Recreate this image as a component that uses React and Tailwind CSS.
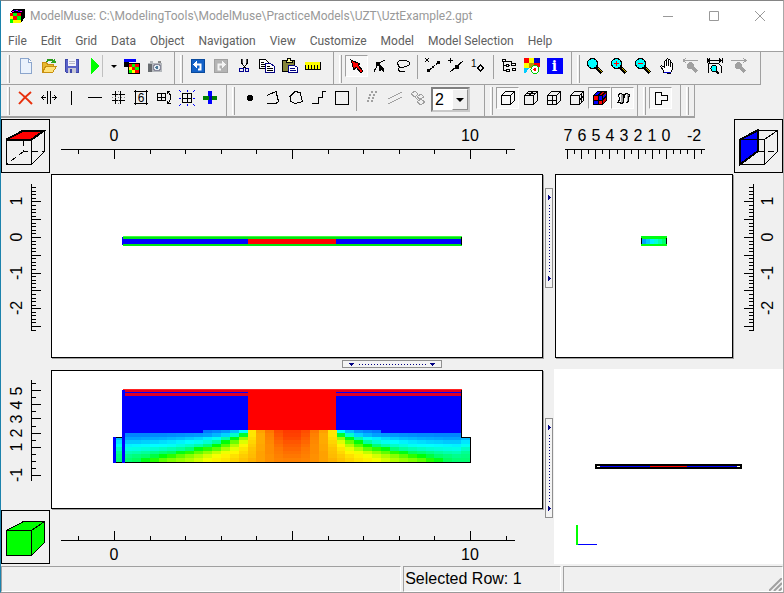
import React, { useState } from 'react';

const menus = [
  'File', 'Edit', 'Grid', 'Data', 'Object', 'Navigation',
  'View', 'Customize', 'Model', 'Model Selection', 'Help',
];

// Hue of every cell below the water table, west edge to the centre line.
// The east half is the mirror image.
const hues = [
  [null, 240, 240, 240, 240, 240, 240, 240, 240, 240, 212, 209, 205, 195, 180, 54, 38, 28, 18, 14],
  [null, 209, 209, 209, 208, 208, 207, 206, 205, 204, 202, 197, 190, 168, 130, 54, 40, 30, 20, 15],
  [195, 202, 202, 201, 200, 199, 197, 195, 192, 189, 184, 177, 160, 125, 85, 52, 40, 31, 22, 17],
  [186, 193, 193, 191, 190, 188, 186, 183, 180, 177, 170, 158, 122, 95, 68, 50, 40, 32, 24, 20],
  [177, 183, 182, 181, 180, 179, 177, 172, 167, 160, 148, 122, 100, 78, 58, 48, 39, 33, 26, 22],
  [166, 174, 173, 171, 169, 166, 162, 157, 148, 123, 110, 98, 80, 66, 54, 46, 39, 33, 28, 24],
  [155, 163, 161, 157, 152, 147, 142, 125, 112, 98, 86, 74, 64, 58, 51, 45, 38, 33, 29, 26],
  [150, 153, 149, 145, 135, 122, 110, 98, 88, 79, 70, 62, 57, 53, 48, 44, 38, 34, 30, 28],
  [147, 147, 142, 125, 112, 98, 90, 84, 78, 70, 62, 57, 54, 50, 46, 42, 38, 34, 31, 30],
];
const cellTops = [430, 433, 437, 440, 444, 447, 451, 454, 458, 462];
const cellLeft = (k) => Math.round(114 + k * 8.9);

const range = (from, to) => Array.from({ length: to - from + 1 }, (_, i) => from + i);

/* ---------- icons ---------- */

const Icon = ({ children, size = 16 }) => (
  <svg
    width={size}
    height={size}
    viewBox={`0 0 ${size} ${size}`}
    fill="none"
    stroke="#000"
    shapeRendering="crispEdges"
    aria-hidden="true"
    className="block shrink-0"
  >
    {children}
  </svg>
);

const AppIcon = () => (
  <Icon>
    <path d="M2 4l3-3h10v9l-3 4" fill="#000" />
    <path d="M3 3h2M7 2h2M11 3h2" stroke="#f0f" />
    <path d="M5 2h2M9 3h2" stroke="#00f" />
    <g stroke="none">
      <path d="M1 5h11v10H1z" fill="#ff0" />
      <path d="M1 5h3v3H1zM8 5h4v3H8zM4 8h4v4H4z" fill="#f00" />
      <path d="M4 5h4v3H4zM8 8h4v4H8zM1 11h3v4H1z" fill="#0f0" />
    </g>
  </Icon>
);

const NewIcon = () => (
  <Icon>
    <path d="M2.500 .5h8l3 4v11h-11z" fill="#eaf2fc" stroke="#8ba5cc" />
    <path d="M10.500 .5v4h3" fill="#fff" stroke="#8ba5cc" />
  </Icon>
);

const OpenIcon = () => (
  <Icon>
    <path d="M1.500 14V4.500h4l1 2h6V9" fill="#e8b830" stroke="#c89010" />
    <path d="M1.500 14.500l3-6h11l-4 6z" fill="#ffe27a" stroke="#c89010" />
    <path d="M6 4c1-3 4-3 6-1" stroke="#2a9a1c" strokeWidth="2" />
    <path d="M9 5h6l-1-5z" fill="#2fa520" stroke="none" />
  </Icon>
);

const SaveIcon = () => (
  <Icon>
    <path d="M1.500 1.500h13v13h-12l-1-1z" fill="#5a62c8" stroke="#3c46a8" />
    <path d="M4 1h8v7H4z" fill="#f4f4fa" stroke="none" />
    <path d="M5 3.500h6M5 5.500h6" stroke="#b8b8c8" />
    <path d="M4 10h8v5H4z" fill="#c8c8d4" stroke="none" />
    <path d="M6 11h2v4H6z" fill="#3c46a8" stroke="none" />
  </Icon>
);

const RunIcon = () => (
  <Icon>
    <path d="M5 0l8 8-8 8z" fill="#0f0" stroke="none" />
  </Icon>
);

const GridColorIcon = () => (
  <Icon>
    <g stroke="none">
      <path d="M0 1h12v3H0z" fill="#00f" />
      <path d="M0 4h5v5H0zM4 5h12v11H4z" fill="#000" />
      <path d="M5 6h10v9H5z" fill="#ff0" />
      <path d="M5 6h3v3H5zM11 6h4v3h-4zM8 9h3v3H8zM11 12h4v3h-4z" fill="#f00" />
      <path d="M8 6h3v3H8zM11 9h4v3h-4zM5 12h3v3H5z" fill="#0f0" />
    </g>
  </Icon>
);

const CameraIcon = () => (
  <Icon>
    <path d="M1 5h2V3h3v2h9v9H1z" fill="#b4b8bc" stroke="none" />
    <path d="M1 6h4v8H1z" fill="#686c70" stroke="none" />
    <path d="M11 3h3v2h-3z" fill="#888" stroke="none" />
    <circle cx="10" cy="9.500" r="3.500" fill="#e4eaf0" stroke="#889" />
    <circle cx="10" cy="9.500" r="1.500" fill="#4a7898" stroke="none" />
  </Icon>
);

const UndoIcon = () => (
  <Icon>
    <rect x="1.500" y="1.500" width="13" height="13" fill="#1462c8" stroke="#0a4a9c" />
    <path d="M6 6.500h4.500v5H8" stroke="#fff" strokeWidth="2" shapeRendering="auto" />
    <path d="M3 6.500L7 3v7z" fill="#fff" stroke="none" />
  </Icon>
);

const RedoIcon = () => (
  <Icon>
    <rect x="1.500" y="1.500" width="13" height="13" fill="#b4b4b4" stroke="#a0a0a0" />
    <path d="M10 6.500H5.500v5H8" stroke="#f4f4f4" strokeWidth="2" shapeRendering="auto" />
    <path d="M13 6.500L9 3v7z" fill="#f4f4f4" stroke="none" />
  </Icon>
);

const CutIcon = () => (
  <Icon>
    <path d="M5.500 1v4l4 5M11.500 1v4l-4 5" />
    <path d="M6.500 1v4M10.500 1v4" stroke="#555" />
    <circle cx="5.500" cy="12" r="2" stroke="#000090" />
    <circle cx="11" cy="12" r="2" stroke="#000090" />
  </Icon>
);

const CopyIcon = () => (
  <Icon>
    <path d="M.5 1.500h6l3 3v6h-9z" fill="#fff" />
    <path d="M2 4.500h3M2 6.500h4M2 8.500h4" />
    <path d="M6.500 5.500h5l4 3v6h-9z" fill="#fff" stroke="#000080" />
    <path d="M8 8.500h3M8 10.500h6M8 12.500h6" />
  </Icon>
);

const PasteIcon = () => (
  <Icon>
    <path d="M.5 2.500h12v11H.5z" fill="#85853a" />
    <path d="M4 4.500V2.500h1l1-2h2l1 2h1v2z" fill="#ff9" />
    <path d="M6.500 7.500h6l3 2v5h-9z" fill="#fff" stroke="#000080" />
    <path d="M8 10.500h5M8 12.500h6" stroke="#000080" />
  </Icon>
);

const RulerIcon = () => (
  <Icon>
    <path d="M0 4h16v7H0z" fill="#ff0" stroke="none" />
    <path d="M0 11.500h16M.5 7v4M3.500 7v4M6.500 7v4M9.500 7v4M12.500 7v4M15.500 4v7" />
  </Icon>
);

const PointerIcon = () => (
  <Icon>
    <path d="M2 2l9 4-2 1 5 6-2 2-5-6-2 3z" fill="#f00" />
  </Icon>
);

const NodePointerIcon = () => (
  <Icon>
    <path d="M13.500 1.500L6 6l-4 7.500M6 6l6 8" />
    <path d="M4 4h4v4H4z" fill="#000" stroke="none" />
    <path d="M7 6l6 5-6 2z" fill="#000" stroke="none" />
  </Icon>
);

const LassoIcon = () => (
  <Icon>
    <path d="M2.500 4.500l2-2h7l3 2v2l-3 2-5 1-3-1-1-4M4.500 8.500l-1 3 1 2h5" />
  </Icon>
);

const DeleteNodeIcon = () => (
  <Icon>
    <path d="M0 0l4 4M4 0L0 4" />
    <path d="M2 14L14 4" strokeDasharray="2 2" />
    <path d="M2 11h3v3H2zM7 8h2v2H7zM12 3h3v3h-3z" fill="#000" stroke="none" />
  </Icon>
);

const AddNodeIcon = () => (
  <Icon>
    <path d="M2.500 0v5M0 2.500h5M2 14L15 3" />
    <path d="M7 7h4v4H7z" fill="#000" stroke="none" />
  </Icon>
);

const ValueNodeIcon = () => (
  <Icon>
    <text x="0" y="9" fontSize="10" fontFamily="Liberation Sans, Arial, sans-serif" fill="#000" stroke="none">1</text>
    <path d="M9.500 7l3 3-3 3-3-3z" />
  </Icon>
);

const TreeIcon = () => (
  <Icon>
    <path d="M2.500 2v10.500h4M2.500 7.500h6M4 3.500h6v3" />
    <path d="M1.500 1.500h3v2h-3zM10.500 5.500h4v2h-4zM5.500 6.500h2v2h-2zM5.500 11.500h3v2h-3zM11.500 10.500h3v2h-3z" fill="#fff" />
  </Icon>
);

const ColorsIcon = () => (
  <Icon>
    <g stroke="none">
      <path d="M0 0h5v5H0z" fill="#f00" />
      <path d="M5 0h5v5H5zM0 5h5v5H0z" fill="#ff0" />
      <path d="M10 0h6v5h-6z" fill="#00c" />
      <path d="M5 5h5v5H5z" fill="#c09000" />
      <path d="M10 5h6v4h-6z" fill="#f00" />
      <path d="M0 10h5l-3 5H0z" fill="#0cf" />
    </g>
    <circle cx="11" cy="11.500" r="4" fill="#fff" stroke="#0c0" />
    <circle cx="11" cy="11.500" r="1.500" fill="#f00" stroke="none" />
  </Icon>
);

const InfoIcon = () => (
  <span className="flex size-4 items-center justify-center bg-[#00f] font-['DejaVu_Serif',serif] text-sm leading-4 font-bold text-white">
    i
  </span>
);

const LensIcon = ({ sign }) => (
  <Icon>
    <path d="M9 9l6 6" strokeWidth="3" />
    <path d="M11 10l4 4" stroke="#d8b800" />
    <circle cx="5.500" cy="5.500" r="5" fill="#0ff" />
    {sign && <path d="M3 5.500h5" stroke="#f00" />}
    {sign === '+' && <path d="M5.500 3v5" stroke="#f00" />}
  </Icon>
);

const HandIcon = () => (
  <Icon>
    <path d="M4.500 14.500v-2l-3-4 1-1 3 2V3.500l1-1 1 1v4-6l1-1 1 1v6-5l1-1 1 1v6-3l1-1 1 1v6l-2 3v1z" fill="#fff" />
    <path d="M5 14.500h7" stroke="#00c" />
  </Icon>
);

const ZoomArrowIcon = ({ back }) => (
  <Icon>
    <path d="M0 2.500h15" stroke="#a0a0a0" />
    <path d={back ? 'M3 0L0 2.500 3 5' : 'M12 0l3 2.500L12 5'} stroke="#a0a0a0" />
    <circle cx="7.500" cy="7.500" r="3.500" fill="#a0a0a0" stroke="none" />
    <path d="M9 9l5 5" stroke="#a0a0a0" strokeWidth="3" />
  </Icon>
);

const ZoomExtentIcon = () => (
  <Icon>
    <path d="M1 2.500h13M3 .5L1 2.500l2 2M12 .5l2 2-2 2M1.500 15V5.500h10l3 3V15M.5 0v5M15 0v5" />
    <circle cx="7" cy="10.500" r="3" fill="#0ff" />
    <path d="M9 13l3 3" strokeWidth="2" />
  </Icon>
);

const DeleteIcon = () => (
  <Icon>
    <path d="M1 2c4 3 8 7 13 12M13 2C8 6 5 9 1 14" stroke="#e8300c" strokeWidth="2" shapeRendering="auto" />
  </Icon>
);

const SpreadIcon = () => (
  <Icon>
    <path d="M6.500 1v13M9.500 1v13M0 7.500h5M11 7.500h5M3 5L.5 7.500 3 10M13 5l2.500 2.500L13 10" />
  </Icon>
);

const VLineIcon = () => <Icon><path d="M7.500 1v14" /></Icon>;
const HLineIcon = () => <Icon><path d="M1 7.500h14" /></Icon>;

const MeshIcon = () => (
  <Icon>
    <path d="M5.500 1v13M10.500 1v13M2 4.500h13M2 10.500h13" />
    <path d="M8.500 1v13M2 7.500h13" stroke="#888" strokeDasharray="1 2" />
  </Icon>
);

const SixIcon = () => (
  <Icon>
    <path d="M2.500 1.500h11v12h-11zM1 1.500h14M1 13.500h14M2.500 0v15M13.500 0v15" />
    <text
      x="8"
      y="12"
      fontSize="12"
      fontFamily="Liberation Sans, Arial, sans-serif"
      textAnchor="middle"
      fill="#000"
      stroke="none"
    >
      6
    </text>
  </Icon>
);

const RotateGridIcon = () => (
  <Icon>
    <path d="M1.500 3.500h8v7h-8zM5.500 3v8M1 7.500h8M11 1.500c4 2 5 7 1 12M11 4V1.500h3M15 13.500h-4v-3" />
  </Icon>
);

const GridSizeIcon = () => (
  <Icon>
    <path d="M3.500 3.500h9v9h-9zM8 3v9M3 8h9" />
    <path d="M8 0v2M8 14v2M0 8h2M14 8h2M0 0l2 2M14 2l2-2M0 16l2-2M14 14l2 2" stroke="#00f" />
  </Icon>
);

const CrossIcon = () => (
  <Icon>
    <g stroke="none">
      <path d="M6 1h4v13H6z" fill="#00f" />
      <path d="M1 6h14v4H1z" fill="#008000" />
      <path d="M7 6h3v4H7z" fill="#0000c0" />
    </g>
  </Icon>
);

const PointIcon = () => (
  <Icon>
    <path d="M6 5h4v1h1v4h-1v1H6v-1H5V6h1z" fill="#000" stroke="none" />
  </Icon>
);

const PolylineIcon = () => <Icon><path d="M2 5.500l9-4 2.500 10-2.500 2H2" /></Icon>;
const PolygonIcon = () => <Icon><path d="M2 6.500l5-5 5 1 2.500 9-7.500 2-4-2z" /></Icon>;
const StepLineIcon = () => <Icon><path d="M1 13.500h6.500v-6h4V1.500H15" /></Icon>;
const SquareIcon = () => <Icon><path d="M1.500 1.500h13v13h-13z" /></Icon>;

const DotsIcon = () => (
  <Icon>
    <g stroke="#a0a0a0" strokeWidth="2" strokeDasharray="2 2">
      <path d="M7 2h8M5 5h8M4 8h8M3 11h6" />
    </g>
  </Icon>
);
const LinesIcon = () => <Icon><path d="M1 9L15 2M1 14l14-7" stroke="#a0a0a0" /></Icon>;
const QuadsIcon = () => (
  <Icon>
    <path d="M1 4l4-3 3 3-3 3zM7 7l4-3 3 3-4 2zM7 12l4-3 4 3-4 3zM5 7l4 4" stroke="#a0a0a0" />
  </Icon>
);

// Small cube with an optional subdivision on one of its faces
const CubeIcon = ({ lines = '' }) => (
  <Icon>
    <path d="M1.500 5.500h9v9h-9zM1.500 5.500l4-4h9l-4 4M14.500 1.500v9l-4 4" />
    {lines && <path d={lines} />}
  </Icon>
);

const ColorCubeIcon = () => (
  <Icon>
    <path d="M1.500 5.500l4-4h9v9l-4 4h-9z" fill="#d00000" />
    <g stroke="none">
      <path d="M2 6h4v4H2zM6 10h4v4H6z" fill="#f00" />
      <path d="M6 6h4v4H6zM2 10h4v4H2zM5 2h4L7 5H3zM11 6l3-3v4l-3 3z" fill="#00f" />
    </g>
    <path d="M1 5.500h9.500v9M6 5v9M1 10h9M10 5.500l4-4M6 5.500l4-4M10.500 10l4-4" />
  </Icon>
);

const ShellIcon = () => (
  <Icon>
    <path d="M6 4h2v9H6zM12 4h2v8h-2z" fill="#a0a0a0" stroke="none" />
    <path d="M2.500 13.500l2-4-1-5 2-1 3 1v8l-2 1-2-1M8.500 11.500l1-7 2-1 3 1-1 4v3l-2 1" />
  </Icon>
);

const ShapeIcon = () => <Icon><path d="M2.500 2.500h6v3h6v5h-6v4h-6z" /></Icon>;

/* ---------- tool bars ---------- */

const ToolButton = ({ label, icon, pressed = false, wide = false }) => (
  <button
    type="button"
    aria-label={label}
    title={label}
    aria-pressed={pressed || undefined}
    className={`flex h-[22px] shrink-0 items-center justify-center ${wide ? 'w-6' : 'w-[23px]'} ${
      pressed ? 'border border-r-white border-b-white border-[#a0a0a0] bg-[#f8f8f8]' : ''
    }`}
  >
    {icon}
  </button>
);

const ToolGroup = ({ label, className, children }) => (
  <div role="toolbar" aria-label={label} className={`flex shrink-0 items-start border-r border-[#a0a0a0] pl-[5px] ${className}`}>
    <span className="mr-[3px] h-7 w-[3px] border-r border-l border-r-[#a0a0a0] border-l-white" />
    {children}
  </div>
);

const Separator = () => (
  <span className="flex h-6 w-[7px] shrink-0 justify-center">
    <span className="w-px bg-[#a0a0a0]" />
  </span>
);

const ToolBars = () => {
  const [width, setWidth] = useState('2');

  return (
    <div className="border-t border-[#a0a0a0] bg-[#f0f0f0]">
      <div className="flex">
        <div className="flex h-[33px] border-b border-[#a0a0a0] pl-px *:pt-[3px]">
          <ToolGroup label="File" className="pr-2">
            <span className="w-px" />
            <ToolButton label="New" icon={<NewIcon />} />
            <ToolButton label="Open" icon={<OpenIcon />} />
            <ToolButton label="Save" icon={<SaveIcon />} />
            <button type="button" aria-label="Run" className="flex h-[22px] w-[19px] items-center justify-end">
              <RunIcon />
            </button>
            <button
              type="button"
              aria-label="Run options"
              className="flex h-[22px] w-[18px] items-center justify-center border-l border-[#c0c0c0] pl-1"
            >
              <svg width="6" height="3" viewBox="0 0 6 3"><path d="M0 0h6L3 3z" /></svg>
            </button>
            <ToolButton label="Color grid" icon={<GridColorIcon />} />
            <ToolButton label="Export image" icon={<CameraIcon />} />
          </ToolGroup>
          <ToolGroup label="Edit" className="pr-[9px]">
            <ToolButton label="Undo" icon={<UndoIcon />} />
            <ToolButton label="Redo" icon={<RedoIcon />} />
            <ToolButton label="Cut" icon={<CutIcon />} />
            <ToolButton label="Copy" icon={<CopyIcon />} />
            <ToolButton label="Paste" icon={<PasteIcon />} />
            <ToolButton label="Measure" icon={<RulerIcon />} />
          </ToolGroup>
          <ToolGroup label="Select" className="pr-[5px]">
            <ToolButton label="Select objects" icon={<PointerIcon />} pressed />
            <ToolButton label="Select nodes" icon={<NodePointerIcon />} />
            <ToolButton label="Lasso" icon={<LassoIcon />} />
            <Separator />
            <ToolButton label="Delete segment" icon={<DeleteNodeIcon />} />
            <ToolButton label="Insert node" icon={<AddNodeIcon />} />
            <ToolButton label="Node value" icon={<ValueNodeIcon />} />
            <Separator />
            <ToolButton label="Data sets" icon={<TreeIcon />} />
            <ToolButton label="Data visualization" icon={<ColorsIcon />} />
            <ToolButton label="Grid value" icon={<InfoIcon />} />
          </ToolGroup>
          <ToolGroup label="Zoom" className="pr-[9px]">
            <ToolButton wide label="Zoom" icon={<LensIcon />} />
            <ToolButton wide label="Zoom in" icon={<LensIcon sign="+" />} />
            <ToolButton wide label="Zoom out" icon={<LensIcon sign="-" />} />
            <ToolButton wide label="Pan" icon={<HandIcon />} />
            <ToolButton wide label="Previous view" icon={<ZoomArrowIcon back />} />
            <ToolButton wide label="Restore view" icon={<ZoomExtentIcon />} />
            <ToolButton wide label="Next view" icon={<ZoomArrowIcon />} />
          </ToolGroup>
        </div>
      </div>
      <div className="flex">
        <div className="flex h-[33px] border-b-2 border-[#a0a0a0] pl-px *:pt-0.5">
          <ToolGroup label="Grid" className="pr-[5px]">
            <span className="w-px" />
            <ToolButton label="Delete grid line" icon={<DeleteIcon />} />
            <ToolButton label="Move grid line" icon={<SpreadIcon />} />
            <ToolButton label="Add vertical line" icon={<VLineIcon />} />
            <ToolButton label="Add horizontal line" icon={<HLineIcon />} />
            <ToolButton label="Subdivide" icon={<MeshIcon />} />
            <ToolButton label="Set width" icon={<SixIcon />} />
            <ToolButton label="Rotate grid" icon={<RotateGridIcon />} />
            <ToolButton label="Grid extent" icon={<GridSizeIcon />} />
            <ToolButton label="Generate grid" icon={<CrossIcon />} />
          </ToolGroup>
          <ToolGroup label="Draw" className="pr-3">
            <ToolButton label="Point" icon={<PointIcon />} />
            <ToolButton label="Polyline" icon={<PolylineIcon />} />
            <ToolButton label="Polygon" icon={<PolygonIcon />} />
            <ToolButton label="Straight line" icon={<StepLineIcon />} />
            <ToolButton label="Rectangle" icon={<SquareIcon />} />
            <Separator />
            <ToolButton label="Points" icon={<DotsIcon />} />
            <ToolButton label="Lines" icon={<LinesIcon />} />
            <ToolButton label="Cells" icon={<QuadsIcon />} />
            <div className="relative mx-0.5 h-[25px] w-[39px] shrink-0">
              <select
                aria-label="Vertices per point"
                value={width}
                onChange={(e) => setWidth(e.target.value)}
                className="size-full appearance-none border-2 border-[#c8c8c8] border-t-[#808080] border-l-[#808080] bg-white pl-0.5 text-base leading-5"
              >
                {['1', '2', '3', '4'].map((n) => <option key={n}>{n}</option>)}
              </select>
              <span className="pointer-events-none absolute inset-y-0.5 right-0.5 flex w-4 items-center justify-center border border-white border-r-[#909090] border-b-[#909090] bg-[#f0f0f0]">
                <svg width="8" height="4" viewBox="0 0 8 4"><path d="M0 0h8L4 4z" /></svg>
              </span>
            </div>
          </ToolGroup>
          <ToolGroup label="Show" className="pr-[3px]">
            <ToolButton label="Outline" icon={<CubeIcon />} pressed />
            <ToolButton label="Top grid" icon={<CubeIcon lines="M4 3.500h9M6 5.500l4-4" />} />
            <ToolButton label="Front grid" icon={<CubeIcon lines="M6 5v9M1 10h9" />} />
            <ToolButton label="Side grid" icon={<CubeIcon lines="M12.500 3.500v9M10.500 10l4-4" />} />
            <ToolButton label="Color cells" icon={<ColorCubeIcon />} pressed />
            <ToolButton label="Shell" icon={<ShellIcon />} pressed />
          </ToolGroup>
          <ToolGroup label="Objects" className="pr-2">
            <ToolButton label="Show objects" icon={<ShapeIcon />} pressed />
          </ToolGroup>
          <ToolGroup label="Custom" className="pr-0.5" />
        </div>
      </div>
    </div>
  );
};

/* ---------- rulers, panes and splitters ---------- */

const Drawing = ({ viewBox, label, children }) => (
  <svg viewBox={viewBox} role="img" aria-label={label} shapeRendering="crispEdges" className="block size-full">
    {children}
  </svg>
);

// One axis. `side` is the direction in which the ticks point.
const Ruler = ({ viewBox, label, side, at, from, to, ticks, labels, textAt }) => {
  const vertical = side === 'left' || side === 'right';
  const sign = side === 'left' || side === 'up' ? -1 : 1;
  return (
    <Drawing viewBox={viewBox} label={label}>
      {vertical
        ? <rect x={at} y={from} width="1" height={to - from} />
        : <rect x={from} y={at} width={to - from} height="1" />}
      {ticks.map(([pos, major]) => {
        const size = major ? 10 : 5;
        const start = sign < 0 ? at + 1 - size : at;
        const p = Math.round(pos);
        return vertical
          ? <rect key={pos} x={start} y={p} width={size} height="1" />
          : <rect key={pos} x={p} y={start} width="1" height={size} />;
      })}
      <g fontFamily="Liberation Sans, Arial, sans-serif" fontSize="16" textAnchor="middle">
        {labels.map(([text, pos]) => (
          <text
            key={text}
            transform={vertical ? `translate(${textAt} ${pos}) rotate(-90)` : `translate(${pos} ${textAt})`}
          >
            {text}
          </text>
        ))}
      </g>
    </Drawing>
  );
};

const xTicks = range(-1, 11).map((n) => [114 + n * 35.6, n % 5 === 0]);
const xLabels = [['0', 114], ['10', 470]];
const yTicks = range(-26, 14).map((n) => [237 - n * 3.56, n % 5 === 0]);
const yLabels = [['1', 201], ['0', 237], ['-1', 273], ['-2', 308]];
const depthTicks = range(-5, 14).map((n) => [666 - n * 7.07, n % 2 === 0 && n !== -2]);
const depthLabels = [7, 6, 5, 4, 3, 2, 1, 0, -2].map((n) => [String(n), 666 - n * 14]);
const zTicks = range(-2, 11).map((n) => [461 - n * 7.1, n % 2 === 0 && n !== 0]);
const zLabels = [5, 4, 3, 2, 1, -1].map((n) => [String(n), 461 - n * 14]);

const Pane = ({ children }) => (
  <div className="size-full border border-black bg-white shadow-[1px_1px_0_#a0a0a0]">{children}</div>
);

const Splitter = ({ vertical = false, label }) => (
  <button
    type="button"
    aria-label={label}
    className={`flex items-center justify-center border border-[#909090] bg-[#f4f4f4] ${
      vertical ? 'h-[100px] w-2 flex-col' : 'h-2 w-[100px]'
    }`}
  >
    <svg
      width={vertical ? 6 : 88}
      height={vertical ? 88 : 6}
      viewBox={vertical ? '0 0 6 88' : '0 0 88 6'}
      fill="#000080"
      shapeRendering="crispEdges"
      className="shrink-0"
    >
      {vertical
        ? <path d="M2 1l3 2.500L2 6zM2 82l3 2.500L2 87z" />
        : <path d="M1 2h5L3.500 5zM82 2h5l-2.500 3z" />}
      {range(0, 22).map((n) => (
        vertical
          ? <rect key={n} x="3" y={11 + n * 3} width="1" height="1" />
          : <rect key={n} x={11 + n * 3} y="3" width="1" height="1" />
      ))}
    </svg>
  </button>
);

const ViewCube = ({ view }) => (
  <button type="button" aria-label={`${view} view`} className="h-[54px] w-[49px] border border-black">
    <svg viewBox="1 1 47 52" fill="none" stroke="#000" shapeRendering="crispEdges" className="block size-full">
      {view === 'Top' && <path d="M5.500 20.500L22.500 11.500H43.500L30.500 20.500z" fill="#f00" strokeWidth="2" />}
      {view === 'Side' && <path d="M6 20.500L23.500 11.500V32.500L6 45.500z" fill="#00f" strokeWidth="2" />}
      {view === 'Front' && <path d="M5.500 20.500L22.500 11.500H43.500V32.500L30.500 45.500H5.500z" fill="#0f0" />}
      <path d="M5.500 20.500H30.500V45.500H5.500zM5.500 20.500L22.500 11.500H43.500L30.500 20.500M43.500 11.500V32.500L30.500 45.500" />
      {view !== 'Front' && (
        <path d={view === 'Top' ? 'M22.500 21V32.500H43M22.500 32.500L6 45' : 'M24 32.500H43'} strokeDasharray="6 4" />
      )}
    </svg>
  </button>
);

const TopModel = () => (
  <Drawing viewBox="52 175 490 182" label="Top view of the model">
    <rect x="123" y="236" width="339" height="10" fill="#00e614" />
    <rect x="123" y="236" width="339" height="1" fill="#3dff3d" />
    <rect x="122" y="239" width="340" height="5" fill="#00f" />
    <rect x="122" y="237" width="1" height="8" fill="#00f" />
    <rect x="461" y="237" width="1" height="8" fill="#000" />
    <rect x="248" y="239" width="88" height="5" fill="#f00" />
  </Drawing>
);

const SideModel = () => (
  <Drawing viewBox="556 175 176 182" label="Side view of the model">
    <rect x="641" y="236" width="26" height="10" fill="#0f1" />
    {['#00a0ff', '#00c8ff', '#00f0ff', '#00ffd8', '#00ffa8', '#00ff70'].map((color, i) => (
      <rect key={color} x={642 + i * 4} y="239" width="4" height="5" fill={color} />
    ))}
    <rect x="641" y="238" width="1" height="6" />
    <rect x="666" y="238" width="1" height="6" />
  </Drawing>
);

const FrontModel = () => (
  <Drawing viewBox="52 371 490 137" label="Front view of the model">
    {hues.map((row, r) =>
      range(0, 39).map((k) => {
        const hue = row[k < 20 ? k : 39 - k];
        if (hue === null) return null;
        return (
          <rect
            key={`${r}-${k}`}
            x={cellLeft(k)}
            y={cellTops[r]}
            width={cellLeft(k + 1) - cellLeft(k)}
            height={cellTops[r + 1] - cellTops[r]}
            fill={`hsl(${hue} 100% 50%)`}
          />
        );
      })
    )}
    <rect x="123" y="389" width="339" height="41" fill="#00f" />
    <rect x="123" y="389" width="339" height="3" fill="#e6001e" />
    <rect x="123" y="393" width="339" height="3" fill="#dc0028" />
    <rect x="248" y="389" width="88" height="41" fill="#f00" />
    <rect x="123" y="389" width="339" height="1" fill="#f22" />
    <path d="M114 437.500h8M114 462.500h356.500v-25h-9V390" fill="none" stroke="#000" />
    <rect x="113" y="437" width="3" height="26" fill="#00f" />
    <rect x="122" y="390" width="3" height="73" fill="#00f" />
  </Drawing>
);

const PerspectiveModel = () => (
  <Drawing viewBox="554 369 229 195" label="3D view of the model">
    <rect x="595" y="464" width="147" height="5" />
    <rect x="597" y="466" width="143" height="1" fill="#fff" />
    <rect x="600" y="466" width="137" height="1" fill="#00f" />
    <rect x="650" y="466" width="37" height="1" fill="#f00" />
    <rect x="576" y="525" width="2" height="20" fill="#0f0" />
    <rect x="578" y="544" width="19" height="1" fill="#00f" />
  </Drawing>
);

const WindowButton = ({ label, d }) => (
  <button type="button" aria-label={label} className="flex w-[46px] items-center justify-center">
    <svg width="12" height="12" viewBox="0 0 12 12" fill="none" stroke="#999" aria-hidden="true">
      <path d={d} />
    </svg>
  </button>
);

const App = () => {
  return (
    <div className="flex h-screen min-h-[420px] flex-col overflow-hidden border border-t-[#858585] border-r-[#a8a8a8] border-b-[#9a9a9a] border-l-[#1c82ac] bg-[#f0f0f0] font-['Liberation_Sans',Arial,sans-serif] text-base text-black">
      <header className="flex h-[29px] shrink-0 bg-white font-[Roboto,'Noto_Sans',sans-serif] text-xs text-[#999]">
        <div className="flex grow items-center gap-[5px] pl-2">
          <AppIcon />
          <h1 className="whitespace-nowrap">
            ModelMuse: C:\ModelingTools\ModelMuse\PracticeModels\UZT\UztExample2.gpt
          </h1>
        </div>
        <WindowButton label="Minimize" d="M1 6.500h10" />
        <WindowButton label="Maximize" d="M1.500 1.500h9v9h-9z" />
        <WindowButton label="Close" d="M1 1l10 10M11 1L1 11" />
      </header>

      <nav className="flex h-[21px] shrink-0 items-center bg-white font-[Roboto,'Noto_Sans',sans-serif] text-xs text-[#606060]">
        {menus.map((menu) => (
          <button key={menu} type="button" className="px-[7px] whitespace-nowrap">
            {menu}
          </button>
        ))}
      </nav>

      <ToolBars />

      <main className="grid min-h-0 grow grid-cols-[50px_minmax(0,493fr)_10px_minmax(0,179fr)_50px] grid-rows-[56px_minmax(0,184fr)_11px_minmax(0,141fr)_56px]">
        <div className="pt-px"><ViewCube view="Top" /></div>
        <Ruler viewBox="51 118 493 56" label="X axis" side="down" at={149} from={61} to={515} ticks={xTicks} labels={xLabels} textAt={141} />
        <div className="row-span-2 flex items-center justify-center">
          <Splitter vertical label="Resize side view" />
        </div>
        <Ruler viewBox="554 118 179 56" label="Elevation" side="down" at={149} from={565} to={705} ticks={depthTicks} labels={depthLabels} textAt={141} />
        <div className="pt-px pl-px"><ViewCube view="Side" /></div>

        <Ruler viewBox="1 174 50 184" label="Y axis" side="right" at={31} from={184} to={330} ticks={yTicks} labels={yLabels} textAt={22} />
        <div className="pr-px"><Pane><TopModel /></Pane></div>
        <div className="pl-px"><Pane><SideModel /></Pane></div>
        <Ruler viewBox="733 174 50 184" label="Y axis, side view" side="left" at={753} from={184} to={330} ticks={yTicks} labels={yLabels} textAt={773} />

        <div className="col-span-5 flex items-center justify-center">
          <Splitter label="Resize front view" />
        </div>

        <Ruler viewBox="1 369 50 141" label="Z axis" side="right" at={31} from={380} to={481} ticks={zTicks} labels={zLabels} textAt={22} />
        <div className="py-px pr-px"><Pane><FrontModel /></Pane></div>
        <div className="row-span-2 flex items-center justify-center">
          <Splitter vertical label="Resize 3D view" />
        </div>
        <div className="col-span-2 row-span-2 pb-0.5">
          <div className="size-full bg-white"><PerspectiveModel /></div>
        </div>

        <div><ViewCube view="Front" /></div>
        <Ruler viewBox="51 510 493 56" label="X axis, front view" side="up" at={540} from={61} to={515} ticks={xTicks} labels={xLabels} textAt={560} />
      </main>

      <footer className="flex h-[26px] shrink-0 gap-0.5 *:border *:border-t-[#a0a0a0] *:border-r-white *:border-b-white *:border-l-[#a0a0a0]">
        <div className="min-w-0 flex-[402]" />
        <div className="w-[158px] shrink-0 pl-px leading-6 whitespace-nowrap">Selected Row: 1</div>
        <div className="flex min-w-0 flex-[220] items-end justify-end">
          <svg width="13" height="13" viewBox="0 0 13 13" aria-hidden="true">
            <path d="M0 13L13 0M5 13l8-8M10 13l3-3" stroke="#a0a0a0" strokeWidth="2" />
          </svg>
        </div>
      </footer>
    </div>
  );
};

export default App;
